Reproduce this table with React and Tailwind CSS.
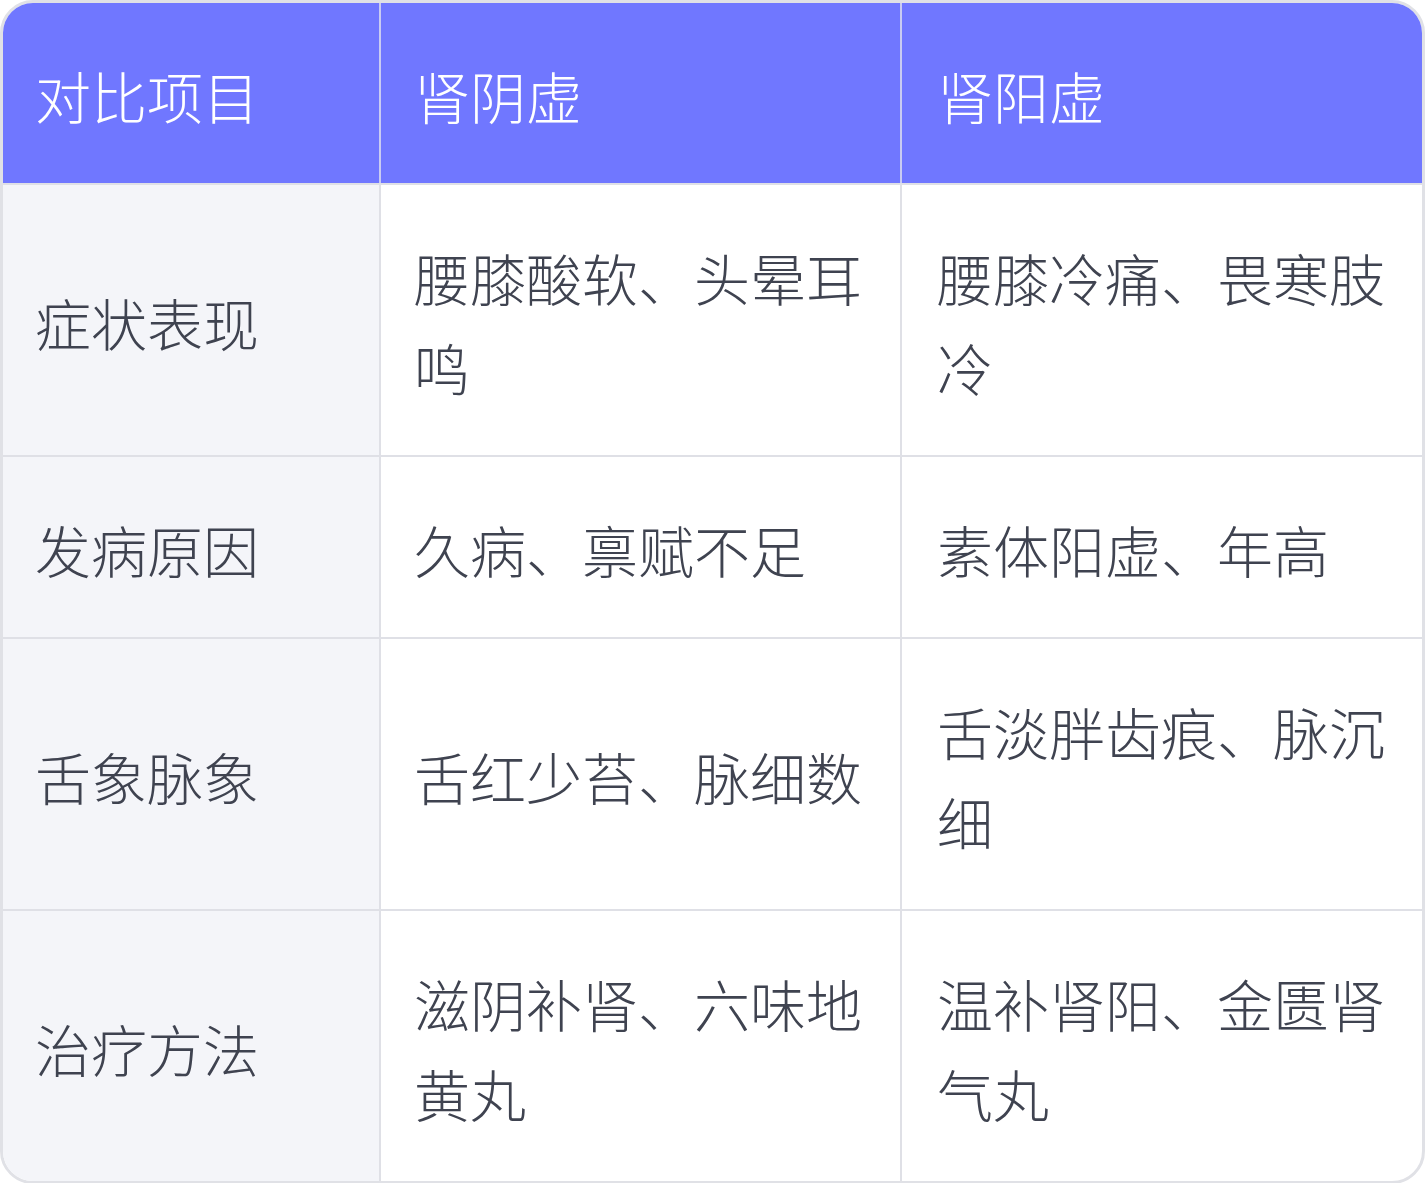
const headers = ["对比项目", "肾阴虚", "肾阳虚"]

const rows = [
    ["症状表现", "腰膝酸软、头晕耳鸣", "腰膝冷痛、畏寒肢冷"],
    ["发病原因", "久病、禀赋不足", "素体阳虚、年高"],
    ["舌象脉象", "舌红少苔、脉细数", "舌淡胖齿痕、脉沉细"],
    ["治疗方法", "滋阴补肾、六味地黄丸", "温补肾阳、金匮肾气丸"],
]

export default function App() {
    return (
        <div className="w-[1425px] h-[1183px] bg-white" style={{ fontFamily: '"Noto Sans CJK SC", "Noto Sans", sans-serif' }}>
            <div className="rounded-[33px] overflow-hidden border-[3px] border-[#e0e1e6] text-[56px] leading-[90px] font-light">
                <div className="grid grid-cols-[376px_521px_1fr] bg-[#7077ff] text-white">
                    <div className="pl-[32px] pt-[47px] pb-[43px]">{headers[0]}</div>
                    <div className="border-l-2 border-[#c9cbf2] pl-[33px] pt-[47px] pb-[43px]">{headers[1]}</div>
                    <div className="border-l-2 border-[#c9cbf2] pl-[35px] pt-[47px] pb-[43px]">{headers[2]}</div>
                </div>
                {rows.map((r) => (
                    <div key={r[0]} className="grid grid-cols-[376px_521px_1fr] border-t-2 border-[#dfe0e6] text-[#3f4350]">
                        <div className="bg-[#f4f5f9] pl-[32px] pt-[47px] pb-[43px] flex items-center">{r[0]}</div>
                        <div className="border-l-2 border-[#dfe0e6] pl-[33px] pr-[20px] pt-[47px] pb-[43px] flex items-center">{r[1]}</div>
                        <div className="border-l-2 border-[#dfe0e6] pl-[35px] pr-[18px] pt-[47px] pb-[43px] flex items-center">{r[2]}</div>
                    </div>
                ))}
            </div>
        </div>
    )
}
